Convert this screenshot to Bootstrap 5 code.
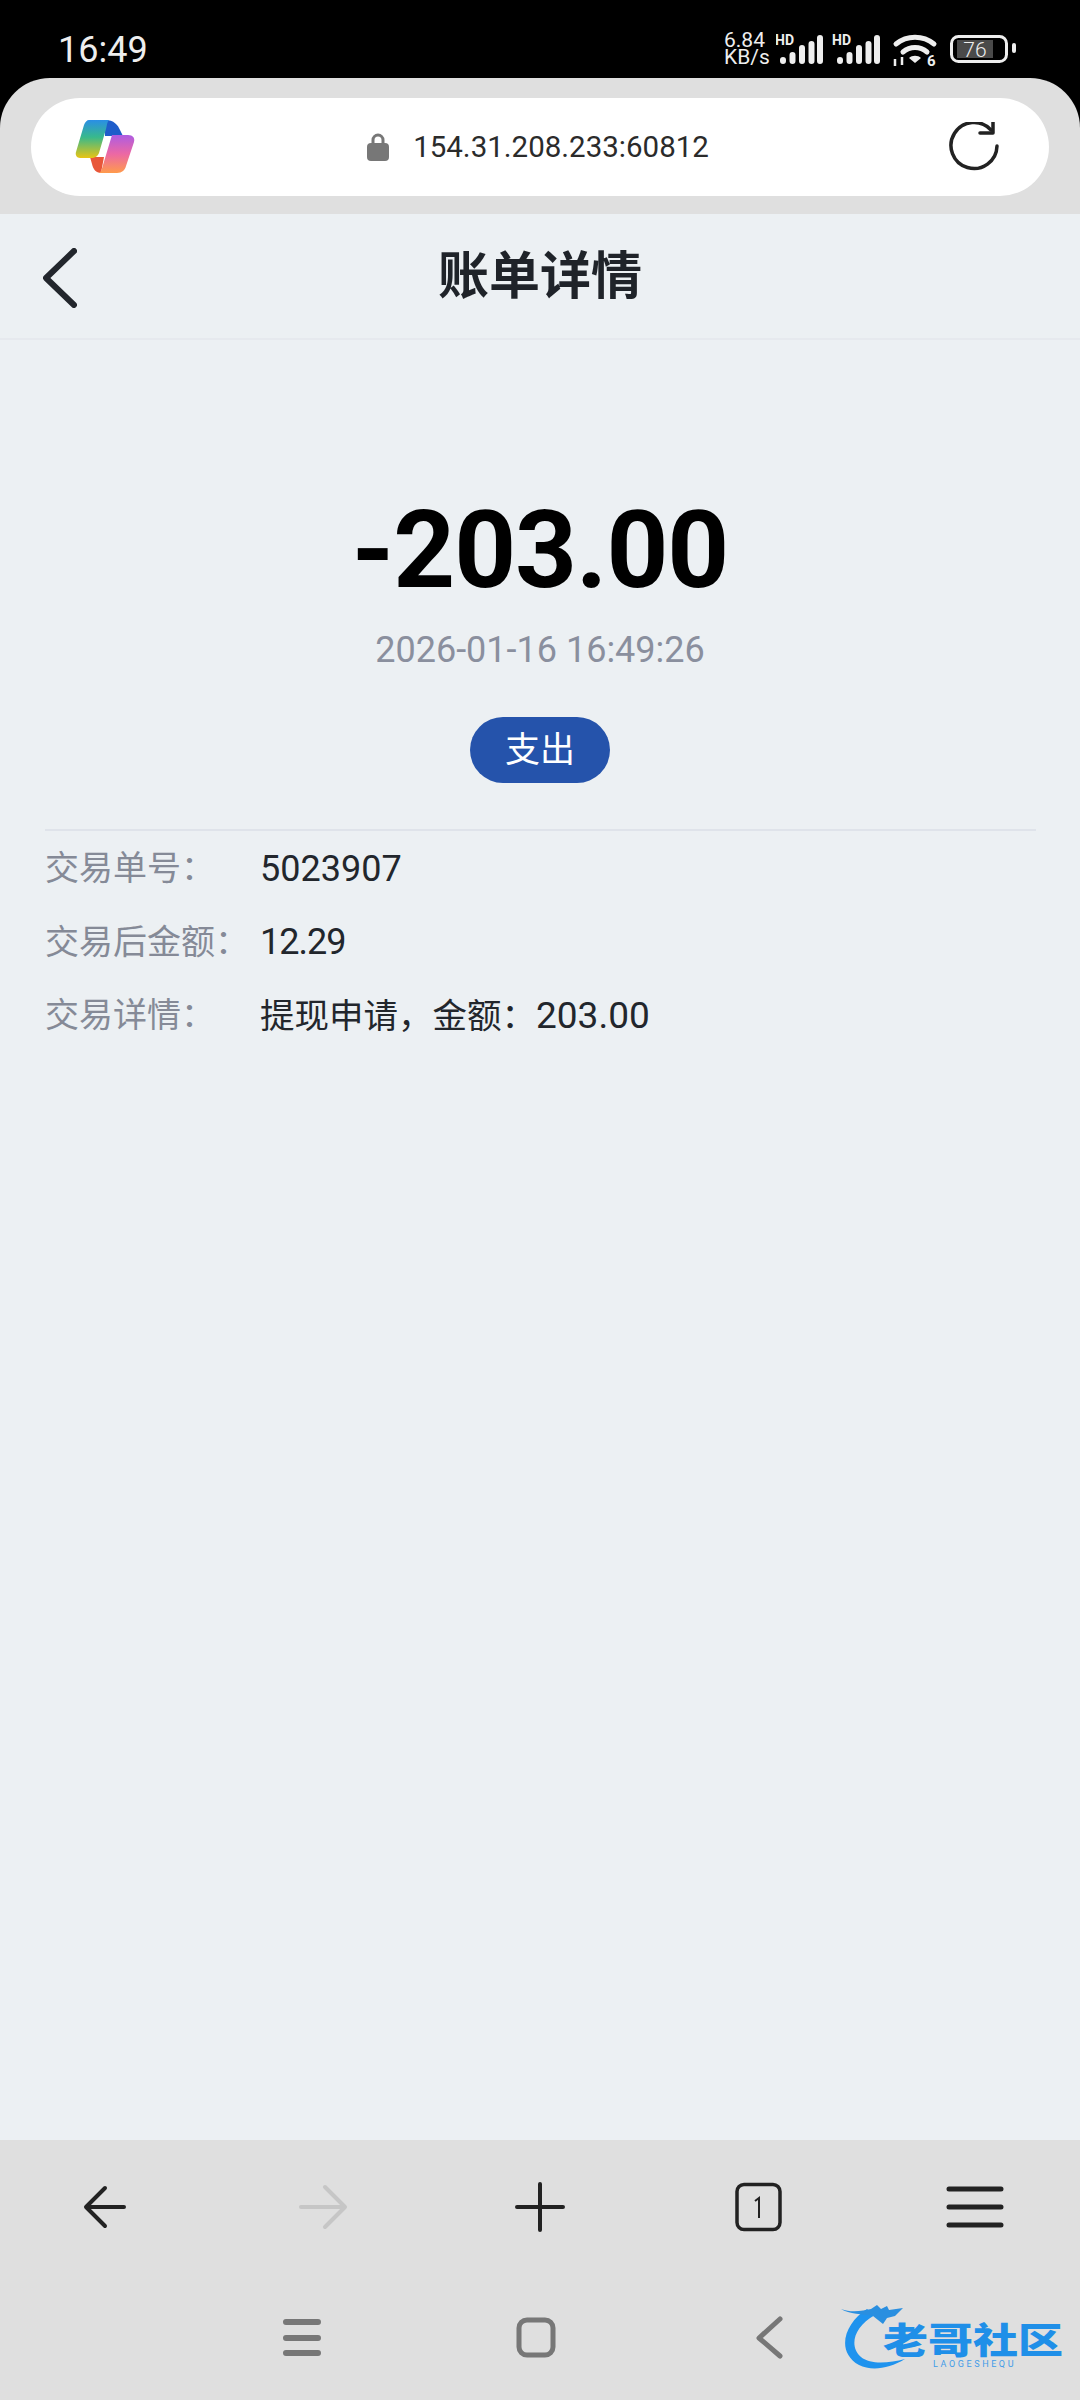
<!DOCTYPE html>
<html lang="zh-CN">
<head>
    <meta charset="UTF-8">
    <title>账单详情</title>
    <link href="https://cdn.jsdelivr.net/npm/bootstrap@5.3.0/dist/css/bootstrap.min.css" rel="stylesheet">
    <style>
        body { font-family: Roboto, "Noto Sans CJK SC", sans-serif; background: #000; color: #22262c; }
        .status-bar { height: 78px; padding: 0 64px 0 58px; color: #eee; }
        .clock { font-size: 36px; line-height: 1; margin-top: 22px; }
        .net-speed { font-size: 21px; line-height: 17px; width: 44px; margin: 20px 8px 0 0; white-space: nowrap; }
        .status-icons { margin-top: 12px; }
        .chrome-top { background: #dfdfdf; height: 136px; padding: 20px 31px 18px; border-radius: 50px 50px 0 0; }
        .url-pill { height: 98px; padding: 0 50px 0 44px; }
        .url-text { font-size: 29.5px; color: #2b2b2b; }
        .page-area { background: #ecf0f3; }
        .page-head { height: 126px; border-bottom: 2px solid #e6e9ee; }
        .page-title { font-size: 51px; font-weight: 700; line-height: 1; color: #1f2329; }
        .head-back { left: 43px; top: 34px; }
        .amount { font-size: 108px; font-weight: 700; line-height: 1; color: #000; margin-top: 156px; letter-spacing: -1px; }
        .when { font-size: 36px; line-height: 1; color: #8a8f9e; margin-top: 28px; }
        .kind-pill { width: 140px; height: 66px; background: #2553ab; color: #fff; font-size: 35px; margin-top: 49px; padding-top: 3px; }
        .info-box { margin: 46px 44px 0 45px; border-top: 2px solid #dfe3ea; padding-top: 1px; }
        .info-row { height: 73.5px; font-size: 36px; }
        .info-label { width: 215px; color: #858a97; font-size: 34px; white-space: nowrap; }
        .value-tight { letter-spacing: -1px; }
        .value-wide { font-size: 37px; }
        .zh-run { font-size: 34.5px; }
        .bottom-bar { background: #dfdfdf; height: 260px; }
        .tool-row { padding: 35px 73px 0; }
        .nav-row { padding: 77px 8px 0 0; gap: 194px; }
        .site-mark { right: 17px; bottom: 28px; width: 224px; height: 67px; }
        .mark-name { left: 44px; top: 22px; font-size: 36px; font-weight: 900; line-height: 30px; color: #1f8fe8; white-space: nowrap; transform: scaleX(1.25); transform-origin: left center; }
        .mark-sub { left: 94px; top: 55px; font-size: 9px; line-height: 1; color: #3f9ce8; letter-spacing: 2.6px; white-space: nowrap; }
    </style>
</head>
<body class="d-flex flex-column min-vh-100 m-0">

<div class="status-bar d-flex align-items-center justify-content-between flex-shrink-0">
    <span class="clock">16:49</span>
    <div class="d-flex align-items-center">
        <div class="net-speed">6.84<br>KB/s</div>
        <svg width="240" height="52" viewBox="776 19 240 52" class="status-icons">
            <g fill="#eee" font-family="Roboto, sans-serif" font-size="14" font-weight="700">
                <text x="775" y="45">HD</text>
                <text x="832" y="45">HD</text>
            </g>
            <g stroke="#eee" stroke-width="6" stroke-linecap="round">
                <path d="M783 60v1M792.500 55v6M802 48v13M811.500 44v17M820 38v23"/>
                <path d="M840 60v1M849.500 55v6M859 48v13M868.500 44v17M877 38v23"/>
            </g>
            <g fill="none" stroke="#eee" stroke-width="5" stroke-linecap="round">
                <path d="M896 44c11-9 27-9 38 0"/>
                <path d="M903 52c7-6 17-6 24 0"/>
            </g>
            <path d="M909 58c3-3 9-3 12 0l-6 5z" fill="#eee"/>
            <text x="927" y="66" fill="#eee" font-family="Roboto, sans-serif" font-size="15" font-weight="700">6</text>
            <path d="M895 59v7M902 57v8" stroke="#eee" stroke-width="2.500"/>
            <rect x="951.500" y="36.500" width="55" height="25" rx="7" fill="none" stroke="#eee" stroke-width="3"/>
            <rect x="957" y="40" width="36" height="18" fill="#4a4a4a"/>
            <text x="975" y="57" fill="#eee" text-anchor="middle" font-family="Roboto, sans-serif" font-size="21" font-weight="300">76</text>
            <rect x="1012" y="43" width="4" height="10" rx="2" fill="#eee"/>
        </svg>
    </div>
</div>

<div class="chrome-top flex-shrink-0">
    <div class="url-pill bg-white rounded-pill d-flex align-items-center justify-content-between">
        <svg width="60" height="54" viewBox="0 0 60 54">
            <defs>
                <linearGradient id="cpLeft" x1="0" y1="0" x2="0" y2="1">
                    <stop offset="0" stop-color="#2a8ee6"/>
                    <stop offset=".45" stop-color="#38b98c"/>
                    <stop offset="1" stop-color="#e8c414"/>
                </linearGradient>
                <linearGradient id="cpRight" x1="0" y1="0" x2="0" y2="1">
                    <stop offset="0" stop-color="#ae5ce2"/>
                    <stop offset=".5" stop-color="#ec68a4"/>
                    <stop offset="1" stop-color="#ff9b4c"/>
                </linearGradient>
            </defs>
            <path d="M30 0c9 0 13 5 15 10l3 6H30z" fill="#1f5dca"/>
            <path d="M15 37h14l-3 16c-5 0-8-4-9-9z" fill="#e8573a"/>
            <path d="M14 0h20c-2 2-2 5-3 9l-7 24c-1 3-4 5-8 5H5c-3 0-5-3-4-6L9 5c1-3 3-5 5-5z" fill="url(#cpLeft)"/>
            <path d="M37 15h16c5 0 7 3 6 7l-8 24c-1 4-4 7-9 7H24c2-1 3-4 4-8z" fill="url(#cpRight)"/>
        </svg>
        <div class="d-flex align-items-center gap-4 me-2">
            <svg width="22" height="28" viewBox="0 0 22 28">
                <path d="M6 11V7a5 5 0 0 1 10 0v4" fill="none" stroke="#777" stroke-width="3"/>
                <rect x="0" y="10" width="22" height="18" rx="4" fill="#777"/>
            </svg>
            <span class="url-text">154.31.208.233:60812</span>
        </div>
        <svg width="50" height="50" viewBox="0 0 50 50">
            <path d="M42 8A23 23 0 1 0 48 24" fill="none" stroke="#222" stroke-width="3.5" stroke-linecap="round"/>
            <path d="M31 11H44V0" fill="none" stroke="#222" stroke-width="3.5" stroke-linecap="round" stroke-linejoin="round"/>
        </svg>
    </div>
</div>

<main class="page-area flex-grow-1">
    <div class="page-head position-relative d-flex align-items-center justify-content-center">
        <svg class="head-back position-absolute" width="34" height="60" viewBox="0 0 34 60">
            <path d="M31 3L3 30l28 27" fill="none" stroke="#22262c" stroke-width="6" stroke-linecap="round" stroke-linejoin="round"/>
        </svg>
        <span class="page-title">账单详情</span>
    </div>
    <div class="d-flex flex-column align-items-center">
        <div class="amount">-203.00</div>
        <div class="when">2026-01-16 16:49:26</div>
        <div class="kind-pill rounded-pill d-flex align-items-center justify-content-center">支出</div>
    </div>
    <div class="info-box">
        <div class="info-row d-flex align-items-center"><span class="info-label">交易单号：</span><span>5023907</span></div>
        <div class="info-row d-flex align-items-center"><span class="info-label">交易后金额：</span><span class="value-tight">12.29</span></div>
        <div class="info-row d-flex align-items-center"><span class="info-label">交易详情：</span><span class="value-wide"><span class="zh-run">提现申请，金额：</span>203.00</span></div>
    </div>
</main>

<div class="bottom-bar position-relative flex-shrink-0">
    <div class="tool-row d-flex justify-content-between">
        <svg width="64" height="64" viewBox="0 0 64 64">
            <path d="M51 32H14M32 13L13 32l19 19" fill="none" stroke="#222" stroke-width="4" stroke-linecap="round" stroke-linejoin="round"/>
        </svg>
        <svg width="64" height="64" viewBox="0 0 64 64">
            <path d="M10 32h42M34 12l20 20-20 20" fill="none" stroke="#c6c6c6" stroke-width="4" stroke-linecap="round" stroke-linejoin="round"/>
        </svg>
        <svg width="64" height="64" viewBox="0 0 64 64">
            <path d="M32 9v46M9 32h46" fill="none" stroke="#222" stroke-width="4" stroke-linecap="round"/>
        </svg>
        <svg width="64" height="64" viewBox="0 0 64 64">
            <rect x="11" y="9.500" width="43" height="45" rx="7" fill="none" stroke="#222" stroke-width="3.500"/>
            <path d="M29 26l4-3v20" fill="none" stroke="#222" stroke-width="2"/>
        </svg>
        <svg width="64" height="64" viewBox="0 0 64 64">
            <path d="M6 14h52M6 32h52M6 50h52" fill="none" stroke="#222" stroke-width="5" stroke-linecap="round"/>
        </svg>
    </div>
    <div class="nav-row d-flex justify-content-center">
        <svg width="40" height="44" viewBox="0 0 40 44">
            <path d="M4 6h32M4 22h32M4 37h32" fill="none" stroke="#777" stroke-width="6" stroke-linecap="round"/>
        </svg>
        <svg width="40" height="44" viewBox="0 0 40 44">
            <rect x="3" y="4" width="34" height="35" rx="8" fill="none" stroke="#777" stroke-width="5"/>
        </svg>
        <svg width="40" height="44" viewBox="0 0 40 44">
            <path d="M30 3L9 22l21 18" fill="none" stroke="#777" stroke-width="5" stroke-linecap="round" stroke-linejoin="round"/>
        </svg>
    </div>
    <div class="site-mark position-absolute">
        <svg class="position-absolute top-0 start-0" width="120" height="67" viewBox="0 0 120 67">
            <path d="M28 4C6 18-4 46 20 60c12 6 30 4 46-6-16 4-34 6-44-2C10 42 14 22 36 10z" fill="#1f93ee"/>
            <path d="M2 4c10 4 22 2 30 0l6-4 4 4 6-3 2 4 14-2-8 8-8 2-4 6-10-8c-10-2-24-2-32-7z" fill="#2a8fe0"/>
        </svg>
        <span class="mark-name position-absolute">老哥社区</span>
        <span class="mark-sub position-absolute">LAOGESHEQU</span>
    </div>
</div>

<script src="https://cdn.jsdelivr.net/npm/bootstrap@5.3.0/dist/js/bootstrap.bundle.min.js"></script>
</body>
</html>
